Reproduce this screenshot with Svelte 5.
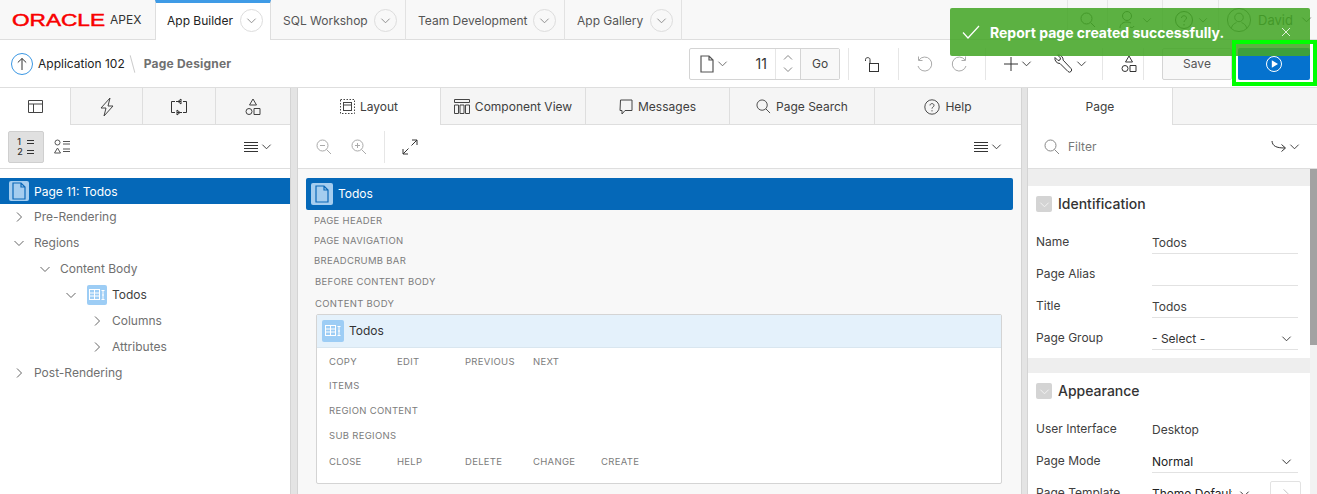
<script>
	const topTabs = [
		{ label: 'App Builder', active: true, width: 116 },
		{ label: 'SQL Workshop', width: 135 },
		{ label: 'Team Development', width: 159 },
		{ label: 'App Gallery', width: 117 }
	];
	const tree = [
		{ label: 'Pre-Rendering', level: 0, open: false },
		{ label: 'Regions', level: 0, open: true },
		{ label: 'Content Body', level: 1, open: true },
		{ label: 'Todos', level: 2, open: true, icon: true },
		{ label: 'Columns', level: 3, open: false },
		{ label: 'Attributes', level: 3, open: false },
		{ label: 'Post-Rendering', level: 0, open: false }
	];
	const slots = [
		['PAGE HEADER', 20, 0],
		['PAGE NAVIGATION', 20, 0],
		['BREADCRUMB BAR', 20, 0],
		['BEFORE CONTENT BODY', 22, 1],
		['CONTENT BODY', 22, 1]
	];
	const regionRows = [
		{ h: 24, cells: ['COPY', 'EDIT', 'PREVIOUS', 'NEXT'] },
		{ h: 24, cells: ['ITEMS'] },
		{ h: 27, cells: ['REGION CONTENT'] },
		{ h: 23, cells: ['SUB REGIONS'] },
		{ h: 28, cells: ['CLOSE', 'HELP', 'DELETE', 'CHANGE', 'CREATE'] }
	];
</script>

{#snippet chev(size = 12, dir = 'down')}
	<svg class="chev" class:right={dir === 'right'} width={size} height={size} viewBox="0 0 12 12" fill="none" stroke="currentColor" stroke-width="1"><path d="M1.5 4l4.5 4.5L10.5 4" /></svg>
{/snippet}

{#snippet pageIcon(size = 20, color = '#444')}
	<svg width={size} height={size} viewBox="0 0 20 20" fill="none" stroke={color} stroke-width="1.2"><path d="M4 2h8l4 4v12H4zM12 2v4h4" /></svg>
{/snippet}

{#snippet regionIcon()}
	<svg width="20" height="20" viewBox="0 0 20 20" fill="none" stroke="#fff" stroke-width="1"><rect x="2.500" y="4.500" width="10" height="10" /><path d="M2.500 8h10M2.500 11h10M7.500 4.500v10M14.500 5.500h3M14.500 14.500h3M16 5.500v9M15 10h2" /></svg>
{/snippet}

{#snippet search(size = 16)}
	<svg width={size} height={size} viewBox="0 0 16 16" fill="none" stroke="currentColor" stroke-width="1"><circle cx="6.500" cy="6.500" r="5.500" /><path d="M10.500 10.500L15 15" /></svg>
{/snippet}

{#snippet shapes()}
	<svg width="16" height="18" viewBox="0 0 16 18" fill="none" stroke="currentColor" stroke-width="1"><path d="M8 1l3.500 6h-7zM9 10.500h6v6H9z" /><circle cx="4" cy="13.500" r="3" /></svg>
{/snippet}

{#snippet menuLines()}
	<svg width="14" height="12" viewBox="0 0 14 12" fill="none" stroke="currentColor" stroke-width="1"><path d="M0 1.500h14M0 4.500h14M0 7.500h14M0 10.500h14" /></svg>
{/snippet}

<div class="app">
	<header class="top">
		<div class="brand">
			<svg class="oracle" width="95" height="16" viewBox="0 0 95 16"><text x="0" y="14" textLength="93" lengthAdjust="spacingAndGlyphs">ORACLE</text></svg>
			<span class="apex">APEX</span>
		</div>
		{#each topTabs as tab}
			<div class="top-tab" class:active={tab.active} style="width: {tab.width}px">
				<span>{tab.label}</span>
				<span class="round">{@render chev(11)}</span>
			</div>
		{/each}
		<div class="top-fill"></div>
		<div class="top-tool search-tool">{@render search(16)}</div>
		<div class="top-tool user-tool">
			<svg width="20" height="20" viewBox="0 0 20 20" fill="none" stroke="currentColor"><circle cx="9" cy="6" r="4.500" /><path d="M2 18c0-4 3-6 7-6 1.500 0 3 .4 4 1M12 17c1.500 1 3 1 4-1" /></svg>
			{@render chev(10)}
		</div>
		<div class="top-tool help-tool">
			<svg width="20" height="20" viewBox="0 0 20 20" fill="none" stroke="currentColor"><circle cx="10" cy="10" r="8.500" /><path d="M7.500 8c0-3 5-3 5 0 0 2-2.500 2-2.500 4M10 14v1.500" /></svg>
			{@render chev(10)}
		</div>
		<div class="top-tool user-menu">
			<svg width="24" height="24" viewBox="0 0 28 28" fill="none" stroke="currentColor"><circle cx="14" cy="14" r="13.500" /><circle cx="14" cy="11" r="5" /><path d="M5 24c1-5 4-6 6-7M23 24c-1-5-4-6-6-7" /></svg>
			<span>David</span>
			{@render chev(11)}
		</div>
	</header>

	<div class="toolbar">
		<span class="up">
			<svg width="22" height="22" viewBox="0 0 22 22" fill="none"><circle cx="11" cy="11" r="10.500" stroke="#3b97e3" /><path d="M11 17V5.500M6.800 9.500L11 5.500l4.200 4" stroke="#333" /></svg>
		</span>
		<span class="crumb">Application 102</span>
		<span class="slash"></span>
		<span class="crumb-current">Page Designer</span>
		<div class="toolbar-fill"></div>
		<div class="page-goto">
			<div class="goto-page">
				{@render pageIcon(20, '#555')}
				{@render chev(11)}
			</div>
			<span class="goto-num">11</span>
			<div class="goto-step">
				<svg width="10" height="7" viewBox="0 0 10 7" fill="none" stroke="#888"><path d="M1 5.500l4-4 4 4" /></svg>
				<svg width="10" height="7" viewBox="0 0 10 7" fill="none" stroke="#888"><path d="M1 1.500l4 4 4-4" /></svg>
			</div>
			<span class="goto-btn">Go</span>
		</div>
		<span class="sep sep-lock"></span>
		<span class="tool lock">
			<svg width="16" height="18" viewBox="0 0 16 18" fill="none" stroke="#333"><rect x="5.500" y="8.500" width="9" height="8" /><path d="M6 8.500V4.500C6 2 1.500 2 1.500 4.500V6" /></svg>
		</span>
		<span class="sep sep-undo"></span>
		<span class="tool undo">
			<svg width="18" height="18" viewBox="0 0 18 18" fill="none" stroke="#aaa"><path d="M4 5a7 7 0 1 1-1 6M3.500 1.500V5.500H7.500" /></svg>
		</span>
		<span class="tool redo">
			<svg width="18" height="18" viewBox="0 0 18 18" fill="none" stroke="#aaa"><path d="M14 5a7 7 0 1 0 1 6M14.500 1.500V5.500H10.500" /></svg>
		</span>
		<span class="sep sep-plus"></span>
		<span class="tool plus">
			<svg width="14" height="14" viewBox="0 0 14 14" fill="none" stroke="#333"><path d="M7 0v14M0 7h14" /></svg>
			{@render chev(11)}
		</span>
		<span class="tool wrench">
			<svg width="20" height="20" viewBox="0 0 20 20" fill="none" stroke="#333"><path d="M2 3.500L5 6.500 7 6 7.500 4 4.500 1A5 5 0 0 1 10.200 6.200L18 14.500A2 2 0 0 1 15 17.500L7 9.500A5 5 0 0 1 2 3.500z" /></svg>
			{@render chev(11)}
		</span>
		<span class="sep sep-shapes"></span>
		<span class="tool shapes">{@render shapes()}</span>
		<span class="sep sep-save"></span>
		<span class="save">Save</span>
		<span class="run">
			<svg width="16" height="16" viewBox="0 0 16 16"><circle cx="8" cy="8" r="7.500" fill="none" stroke="#fff" /><path d="M5.800 4.200L12 8l-6.200 3.800z" fill="#fff" /></svg>
		</span>
	</div>

	<main class="panes">
		<section class="pane left">
			<div class="tabs left-tabs">
				<div class="tab active" style="width: 71px">
					<svg width="15" height="15" viewBox="0 0 15 15" fill="none" stroke="#444"><path d="M.5 1.500h14v12H.500zM.5 5h14M5.500 5v8.500" /></svg>
				</div>
				<div class="tab" style="width: 72px">
					<svg width="16" height="20" viewBox="0 0 16 20" fill="none" stroke="#444"><path d="M11 1L2 11h5l-2 8 9-10H9z" /></svg>
				</div>
				<div class="tab" style="width: 73px">
					<svg width="18" height="18" viewBox="0 0 18 18" fill="none" stroke="#333"><path d="M5 3.500H1.500v11H5M13 3.500h3.500v11H13M6 3.500h5M11 1v5L8 3.500zM7 14.500h5M7 12v5l3-2.500z" /></svg>
				</div>
				<div class="tab grow">{@render shapes()}</div>
			</div>
			<div class="subbar">
				<span class="toggle on">
					<span class="num">1<br />2</span>
					<svg width="9" height="20" viewBox="0 0 9 20" stroke="#333"><path d="M1 3.500h7M1 6.500h7M1 13.500h7M1 16.500h7" /></svg>
				</span>
				<span class="toggle">
					<svg width="17" height="15" viewBox="0 0 17 15" fill="none" stroke="#555"><circle cx="3.500" cy="3.500" r="2.500" /><path d="M3.500 9l3 5h-6zM9 2.500h7M9 5h7M9 10h7M9 12.500h7" /></svg>
				</span>
				<span class="fill"></span>
				<span class="menu left-menu">{@render menuLines()}{@render chev(11)}</span>
			</div>
			<div class="tree">
				<div class="tree-root">
					<span class="page-badge">{@render pageIcon(20, '#0a68b8')}</span>
					Page 11: Todos
				</div>
				{#each tree as row}
					<div class="tree-row" style="padding-left: {12 + row.level * 26}px">
						<span class="tree-toggle">{@render chev(12, row.open ? 'down' : 'right')}</span>
						{#if row.icon}
							<span class="region-badge">{@render regionIcon()}</span>
							<span class="tree-label tree-strong">{row.label}</span>
						{:else}
							<span class="tree-label">{row.label}</span>
						{/if}
					</div>
				{/each}
			</div>
		</section>

		<div class="split"></div>

		<section class="pane middle">
			<div class="tabs mid-tabs">
				<div class="tab active" style="width: 143px">
					<svg width="15" height="15" viewBox="0 0 15 15" fill="none" stroke="#444"><rect x=".5" y=".5" width="14" height="14" stroke-dasharray="1.500 1.500" /><rect x="3.500" y="3.500" width="8" height="8" /><path d="M3.500 6h8" /></svg>
					Layout
				</div>
				<div class="tab" style="width: 145px">
					<svg width="16" height="15" viewBox="0 0 16 15" fill="none" stroke="#444"><path d="M.5 .5h15v3H.5zM.5 6h4v8.500h-4zM6 6h4v8.500H6zM11.500 6h4v8.500h-4z" /></svg>
					Component View
				</div>
				<div class="tab" style="width: 144px">
					<svg width="14" height="16" viewBox="0 0 14 16" fill="none" stroke="#444"><path d="M1.500 1h11.500v10.500H6L3 15v-3.500H1z" /></svg>
					Messages
				</div>
				<div class="tab" style="width: 145px">
					<span class="tab-search">{@render search(15)}</span>
					Page Search
				</div>
				<div class="tab grow">
					<svg width="16" height="16" viewBox="0 0 20 20" fill="none" stroke="#444" stroke-width="1.200"><circle cx="10" cy="10" r="9" /><path d="M7.500 8c0-3 5-3 5 0 0 2-2.500 2-2.500 4M10 14v1.500" /></svg>
					Help
				</div>
			</div>
			<div class="subbar">
				<span class="zoom-tool zoom-out">
					<svg width="16" height="16" viewBox="0 0 16 16" fill="none" stroke="#aaa"><circle cx="6.500" cy="6.500" r="5.500" /><path d="M10.500 10.500L15 15M4 6.500h5" /></svg>
				</span>
				<span class="zoom-tool zoom-in">
					<svg width="16" height="16" viewBox="0 0 16 16" fill="none" stroke="#aaa"><circle cx="6.500" cy="6.500" r="5.500" /><path d="M10.500 10.500L15 15M4 6.500h5M6.500 4v5" /></svg>
				</span>
				<span class="sub-sep"></span>
				<span class="expand">
					<svg width="16" height="16" viewBox="0 0 16 16" fill="none" stroke="#333"><path d="M1 15L6.500 9.500M1 10v5h5M15 1L9.500 6.500M10 1h5v5" /></svg>
				</span>
				<span class="fill"></span>
				<span class="menu mid-menu">{@render menuLines()}{@render chev(11)}</span>
			</div>
			<div class="canvas">
				<div class="page-bar">
					<span class="page-badge big">{@render pageIcon(20, '#0a68b8')}</span>
					<span class="bar-title">Todos</span>
				</div>
				<div class="slots">
					{#each slots as [label, h, inset]}
						<div class="slot" style="height: {h}px; padding-left: {inset}px">{label}</div>
					{/each}
				</div>
				<div class="region">
					<div class="region-head">
						<span class="region-badge big">{@render regionIcon()}</span>
						<span class="bar-title">Todos</span>
					</div>
					<div class="region-body">
						{#each regionRows as row}
							<div class="region-row" style="height: {row.h}px">
								{#each row.cells as cell}
									<span>{cell}</span>
								{/each}
							</div>
						{/each}
					</div>
				</div>
			</div>
		</section>

		<div class="split narrow"></div>

		<section class="pane right">
			<div class="tabs right-tabs">
				<div class="tab active">Page</div>
			</div>
			<div class="subbar filter">
				<span class="filter-icon">{@render search(16)}</span>
				<span class="filter-text">Filter</span>
				<span class="fill"></span>
				<span class="menu go-menu">
					<svg width="16" height="14" viewBox="0 0 16 14" fill="none" stroke="#333"><path d="M1 1c.5 5 4 7 13 7M10.500 4.500L14.500 8l-4 3.500" /></svg>
					{@render chev(11)}
				</span>
			</div>
			<div class="props-wrap">
				<div class="props">
					<div class="group">
						<div class="group-head"><span class="collapse">{@render chev(11)}</span><span class="bar-title">Identification</span></div>
						<div class="prop"><label>Name</label><span class="value">Todos</span></div>
						<div class="prop"><label>Page Alias</label><span class="value"></span></div>
						<div class="prop"><label>Title</label><span class="value">Todos</span></div>
						<div class="prop"><label>Page Group</label><span class="value select">- Select -{@render chev(11)}</span></div>
					</div>
					<div class="group second">
						<div class="group-head"><span class="collapse">{@render chev(11)}</span><span class="bar-title">Appearance</span></div>
						<div class="prop"><label>User Interface</label><span class="value plain">Desktop</span></div>
						<div class="prop"><label>Page Mode</label><span class="value select dark">Normal{@render chev(11)}</span></div>
						<div class="prop template">
							<label>Page Template</label>
							<span class="value select dark short"><span class="clip">Theme Default</span>{@render chev(11)}</span>
							<span class="more">{@render chev(11, 'right')}</span>
						</div>
					</div>
				</div>
				<div class="scroll"><div class="thumb"></div></div>
			</div>
		</section>
	</main>

	<div class="toast">
		<svg width="18" height="14" viewBox="0 0 18 14" fill="none" stroke="#fff" stroke-width="1.200"><path d="M1 7.500L6 13 17 1" /></svg>
		<span class="toast-text">Report page created successfully.</span>
		<svg class="toast-close" width="10" height="10" viewBox="0 0 10 10" stroke="#dff0d8"><path d="M1 1l8 8M9 1l-8 8" /></svg>
	</div>
	<div class="highlight"></div>
</div>

<style>
	:global(body) {
		margin: 0;
		overflow: hidden;
		background: #fff;
	}
	.app {
		position: relative;
		display: flex;
		flex-direction: column;
		width: 1317px;
		height: 494px;
		overflow: hidden;
		font-family: Inter, 'Liberation Sans', sans-serif;
		font-size: 12px;
		color: #404040;
	}
	svg {
		display: block;
		flex: none;
	}
	.chev.right {
		transform: rotate(-90deg);
	}

	/* top bar */
	.top {
		display: flex;
		height: 39px;
		flex: none;
		background: #f8f8f8;
		border-bottom: 1px solid #dedede;
	}
	.brand {
		display: flex;
		align-items: center;
		width: 155px;
		padding-left: 12px;
		box-sizing: border-box;
	}
	.oracle {
		margin-right: 3px;
	}
	.oracle text {
		font-family: 'Liberation Sans', sans-serif;
		font-size: 17px;
		fill: #f80000;
		stroke: #f80000;
		stroke-width: 0.5;
	}
	.apex {
		font-size: 12px;
		color: #333;
	}
	.top-tab {
		display: flex;
		align-items: center;
		justify-content: space-between;
		box-sizing: border-box;
		height: 40px;
		padding: 0 8px 0 12px;
		border-right: 1px solid #e2e2e2;
		color: #555;
	}
	.top-tab.active {
		background: #fff;
		color: #222;
		border-top: 3px solid #3f9be6;
		border-right-color: #dedede;
		border-left: 1px solid #dedede;
		padding: 0 7px 3px 11px;
	}
	.round {
		display: flex;
		align-items: center;
		justify-content: center;
		width: 21px;
		height: 21px;
		border: 1px solid #ddd;
		border-radius: 50%;
		color: #888;
	}
	.top-fill {
		flex: 1;
		border-right: 1px solid #e6e6e6;
	}
	.top-tool {
		display: flex;
		align-items: center;
		justify-content: center;
		gap: 4px;
		flex: none;
		box-sizing: border-box;
		border-right: 1px solid #e6e6e6;
		color: #333;
	}
	.search-tool {
		width: 40px;
	}
	.user-tool {
		width: 55px;
	}
	.help-tool {
		width: 56px;
	}
	.user-menu {
		width: 98px;
		border: 0;
		justify-content: flex-start;
		padding-left: 8px;
		gap: 7px;
	}
	.user-menu span {
		margin-right: 1px;
		font-size: 13px;
	}

	/* toolbar */
	.toolbar {
		display: flex;
		align-items: center;
		flex: none;
		height: 48px;
		box-sizing: border-box;
		padding: 0 7px 0 11px;
		border-bottom: 1px solid #dedede;
		color: #333;
	}
	.crumb {
		margin-left: 5px;
		color: #222;
	}
	.slash {
		width: 1px;
		height: 18px;
		margin: 0 11px 0 7px;
		background: #ccc;
		transform: rotate(-15deg);
	}
	.crumb-current {
		font-weight: 700;
		letter-spacing: 0.2px;
		color: #707070;
	}
	.toolbar-fill,
	.fill {
		flex: 1;
	}
	.page-goto {
		display: flex;
		align-items: stretch;
		width: 151px;
		height: 32px;
		box-sizing: border-box;
		border: 1px solid #d4d4d4;
		border-radius: 2px;
	}
	.goto-page {
		display: flex;
		align-items: center;
		gap: 0;
		padding-left: 7px;
		color: #666;
	}
	.goto-num {
		flex: 1;
		align-self: center;
		padding-right: 8px;
		text-align: right;
		font-size: 14px;
	}
	.goto-step {
		display: flex;
		flex-direction: column;
		align-items: center;
		justify-content: center;
		gap: 5px;
		width: 24px;
		border-left: 1px solid #e6e6e6;
	}
	.goto-btn {
		display: flex;
		align-items: center;
		justify-content: center;
		width: 38px;
		background: #f8f8f8;
		border-left: 1px solid #d4d4d4;
		color: #444;
	}
	.sep {
		width: 1px;
		height: 32px;
		background: #e6e6e6;
	}
	.sep-lock {
		margin-left: 8px;
	}
	.tool {
		display: flex;
		align-items: center;
		gap: 3px;
	}
	.lock {
		margin: 0 18px 0 15px;
	}
	.undo {
		margin: 0 18px 0 16px;
	}
	.redo {
		margin-right: 16px;
	}
	.plus {
		margin: 0 21px 0 18px;
	}
	.wrench {
		margin-right: 15px;
	}
	.shapes {
		margin: 0 6px 0 18px;
	}
	.save {
		display: flex;
		align-items: center;
		justify-content: center;
		box-sizing: border-box;
		width: 70px;
		height: 32px;
		margin: 0 6px 0 18px;
		background: #f8f8f8;
		border: 1px solid #d4d4d4;
		border-radius: 2px;
		color: #555;
	}
	.run {
		display: flex;
		align-items: center;
		justify-content: center;
		width: 72px;
		height: 32px;
		background: #0572ce;
		border-radius: 2px;
	}

	/* panes */
	.panes {
		display: flex;
		flex: 1;
		min-height: 0;
	}
	.pane {
		display: flex;
		flex-direction: column;
		min-width: 0;
	}
	.left {
		width: 290px;
	}
	.middle {
		width: 723px;
	}
	.right {
		width: 289px;
		flex: 1;
	}
	.split {
		width: 6px;
		flex: none;
		background: #e4e4e4;
		border: solid #d4d4d4;
		border-width: 0 1px;
	}
	.split.narrow {
		width: 5px;
	}
	.tabs {
		display: flex;
		flex: none;
		height: 37px;
		box-sizing: border-box;
		background: #f5f5f5;
		border-bottom: 1px solid #dedede;
	}
	.tab {
		display: flex;
		align-items: center;
		justify-content: center;
		gap: 5px;
		box-sizing: border-box;
		height: 37px;
		flex: none;
		border-right: 1px solid #dedede;
		color: #404040;
	}
	.tab.active {
		height: 37px;
		background: #fff;
	}
	.tab.grow {
		flex: 1;
		border-right: 0;
	}
	.right-tabs .tab {
		width: 145px;
	}
	.tab-search {
		color: #444;
	}
	.subbar {
		display: flex;
		align-items: center;
		flex: none;
		height: 44px;
		box-sizing: border-box;
		border-bottom: 1px solid #dedede;
		background: #fff;
	}
	.toggle {
		display: flex;
		align-items: center;
		justify-content: center;
		gap: 3px;
		box-sizing: border-box;
		width: 36px;
		height: 32px;
		margin-left: 8px;
		border-radius: 2px;
		color: #333;
	}
	.toggle.on {
		background: #e0e0e0;
		border: 1px solid #cfcfcf;
	}
	.toggle + .toggle {
		margin-left: 0;
	}
	.num {
		font-size: 9px;
		line-height: 10px;
		font-weight: 500;
	}
	.menu {
		display: flex;
		align-items: center;
		gap: 3px;
		color: #333;
	}
	.left-menu {
		margin-right: 18px;
	}
	.mid-menu {
		margin-right: 19px;
	}
	.zoom-tool {
		margin-left: 18px;
	}
	.zoom-in {
		margin-left: 19px;
	}
	.sub-sep {
		width: 1px;
		height: 32px;
		margin-left: 17px;
		background: #e6e6e6;
	}
	.expand {
		margin-left: 17px;
	}

	/* tree */
	.tree {
		flex: 1;
		padding-top: 9px;
		background: #fff;
		color: #707070;
	}
	.tree-root {
		display: flex;
		align-items: center;
		gap: 5px;
		height: 26px;
		padding-left: 9px;
		background: #0568b8;
		color: #fff;
	}
	.page-badge {
		display: flex;
		align-items: center;
		justify-content: center;
		width: 20px;
		height: 20px;
		background: #a5cdef;
		border-radius: 2px;
	}
	.page-badge.big {
		width: 22px;
		height: 22px;
	}
	.tree-row {
		display: flex;
		align-items: center;
		height: 26px;
	}
	.tree-label {
		margin-bottom: 2px;
	}
	.tree-toggle {
		display: flex;
		justify-content: center;
		width: 14px;
		margin-right: 8px;
		color: #666;
	}
	.region-badge {
		display: flex;
		align-items: center;
		justify-content: center;
		width: 20px;
		height: 20px;
		margin-right: 5px;
		margin-left: 1px;
		background: #9dcdf5;
		border-radius: 2px;
	}
	.region-badge.big {
		width: 22px;
		height: 22px;
		margin: 0 5px 0 0;
	}
	.tree-strong {
		color: #404040;
	}

	/* layout canvas */
	.canvas {
		flex: 1;
		min-height: 0;
		padding: 9px 8px 0;
		background: #f8f8f8;
	}
	.page-bar {
		display: flex;
		align-items: center;
		gap: 5px;
		height: 32px;
		padding-left: 5px;
		background: #0568b8;
		border-radius: 2px;
		color: #fff;
	}
	.bar-title {
		margin-bottom: 2px;
	}
	.slot {
		display: flex;
		align-items: center;
		margin-left: 8px;
		font-size: 9.5px;
		letter-spacing: 0.3px;
		color: #7c7c7c;
	}
	.region {
		width: 686px;
		height: 170px;
		margin: 0 0 0 10px;
		box-sizing: border-box;
		background: #fff;
		border: 1px solid #d4d4d4;
		border-radius: 2px;
	}
	.region-head {
		display: flex;
		align-items: center;
		height: 32px;
		padding-left: 5px;
		background: #e4f1fb;
		border-bottom: 1px solid #d9e6ef;
		color: #333;
	}
	.region-body {
		padding: 1px 0 0 12px;
	}
	.region-row {
		display: flex;
		align-items: center;
		font-size: 9.5px;
		letter-spacing: 0.3px;
		color: #7c7c7c;
	}
	.region-row span {
		width: 68px;
		white-space: nowrap;
	}

	/* property editor */
	.filter {
		color: #888;
	}
	.filter-icon {
		margin-left: 16px;
	}
	.filter-text {
		margin-left: 8px;
		color: #777;
	}
	.go-menu {
		margin-right: 17px;
		gap: 2px;
	}
	.props-wrap {
		display: flex;
		flex: 1;
		min-height: 0;
	}
	.props {
		flex: 1;
		min-width: 0;
		padding-top: 17px;
		background: #eeeeee;
	}
	.group {
		box-sizing: border-box;
		height: 172px;
		padding: 0 12px 0 8px;
		background: #fff;
	}
	.group.second {
		height: auto;
		margin-top: 15px;
		padding-bottom: 40px;
	}
	.group-head {
		display: flex;
		align-items: center;
		height: 36px;
		font-size: 14px;
		font-weight: 500;
		color: #333;
	}
	.collapse {
		display: flex;
		align-items: center;
		justify-content: center;
		width: 16px;
		height: 16px;
		margin-right: 6px;
		background: #d4d4d4;
		border-radius: 2px;
		color: #f4f4f4;
	}
	.prop {
		display: flex;
		align-items: flex-end;
		height: 32px;
		color: #404040;
	}
	.prop label {
		width: 116px;
		flex: none;
		padding-bottom: 5px;
	}
	.value {
		display: flex;
		align-items: center;
		justify-content: space-between;
		flex: 1;
		height: 22px;
		box-sizing: border-box;
		padding-right: 6px;
		border-bottom: 1px solid #e2e2e2;
		color: #404040;
	}
	.value.plain {
		border-bottom-color: transparent;
	}
	.select {
		color: #333;
	}
	.dark {
		color: #222;
	}
	.short {
		flex: none;
		width: 104px;
	}
	.clip {
		width: 80px;
		overflow: hidden;
		white-space: nowrap;
	}
	.more {
		display: flex;
		align-items: center;
		justify-content: center;
		box-sizing: border-box;
		width: 31px;
		height: 24px;
		margin-left: 14px;
		margin-right: -3px;
		border: 1px solid #e2e2e2;
		border-radius: 2px;
		color: #bbb;
	}
	.scroll {
		width: 7px;
		flex: none;
		background: #f2f2f2;
	}
	.thumb {
		height: 176px;
		background: #a2a2a2;
	}

	/* overlays */
	.toast {
		position: absolute;
		left: 950px;
		top: 8px;
		display: flex;
		align-items: center;
		box-sizing: border-box;
		width: 360px;
		height: 48px;
		padding-left: 12px;
		background: rgba(70, 166, 40, 0.88);
		border-radius: 2px;
	}
	.toast-text {
		margin-left: 10px;
		font-size: 14px;
		font-weight: 700;
		color: #fff;
		white-space: nowrap;
	}
	.toast-close {
		position: absolute;
		right: 19px;
		top: 19px;
	}
	.highlight {
		position: absolute;
		left: 1232px;
		top: 40px;
		width: 85px;
		height: 46px;
		box-sizing: border-box;
		border: 4px solid #00ff00;
	}
</style>
